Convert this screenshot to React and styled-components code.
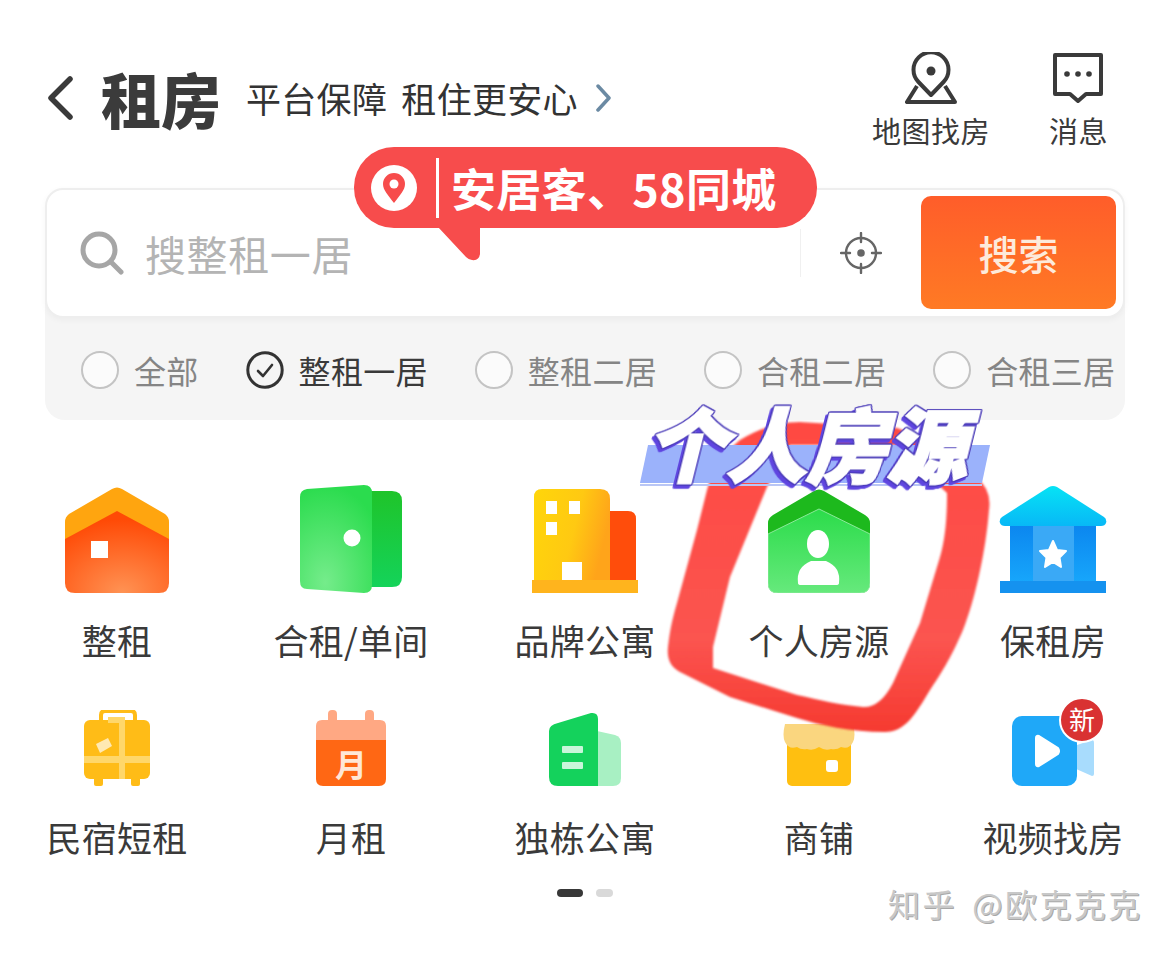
import React from 'react'
import styled, { createGlobalStyle } from 'styled-components'

const Global = createGlobalStyle`
  html, body { margin: 0; padding: 0; background: #fff; }
  body { font-family: "Noto Sans CJK SC", "Noto Sans", sans-serif; color: #3a3a3a; }
`

const Page = styled.div`
  position: relative;
  width: 1170px;
  height: 953px;
  overflow: hidden;
  background: #fff;
`

/* header */
const Header = styled.header`
  display: flex;
  justify-content: space-between;
  align-items: flex-start;
  height: 188px;
  padding: 52px 62px 0 47px;
  box-sizing: border-box;
`
const TitleGroup = styled.div`
  display: flex;
  align-items: center;
  height: 92px;
`
const Title = styled.h1`
  margin: 0 25px 0 28px;
  font-size: 60px;
  line-height: 92px;
  font-weight: 900;
  color: #3b3b3b;
`
const Slogan = styled.span`
  font-size: 35px;
  line-height: 92px;
  color: #333;
  word-spacing: 6px;
  letter-spacing: 0.3px;
  margin-right: 18px;
`
const Actions = styled.div`
  display: flex;
  gap: 59px;
`
const Action = styled.div`
  display: flex;
  flex-direction: column;
  align-items: center;
  gap: 4px;
  font-size: 29px;
  line-height: 44px;
  letter-spacing: 0.5px;
  color: #3a3a3a;
`

/* search */
const SearchArea = styled.section`
  margin: 0 45px;
`
const SearchBox = styled.div`
  position: relative;
  z-index: 1;
  display: flex;
  align-items: center;
  height: 130px;
  padding: 0 7px 0 33px;
  box-sizing: border-box;
  background: #fff;
  border: 2px solid #eeeeee;
  border-radius: 18px;
  box-shadow: 0 2px 6px rgba(0, 0, 0, 0.04);
`
const Placeholder = styled.span`
  flex: 1;
  margin-left: 21px;
  font-size: 41px;
  line-height: 60px;
  color: #b4b4b4;
  letter-spacing: 0.6px;
`
const Locate = styled.div`
  display: flex;
  align-items: center;
  justify-content: center;
  width: 120px;
  height: 48px;
  border-left: 1px solid #f0f0f0;
`
const SearchButton = styled.button`
  width: 195px;
  height: 113px;
  margin-top: -1px;
  border: 0;
  border-radius: 10px;
  background: linear-gradient(180deg, #ff5d2a 0%, #ff7a24 100%);
  color: #fdeadb;
  font-family: inherit;
  font-size: 40px;
  font-weight: 500;
`
const TagPanel = styled.div`
  display: flex;
  align-items: center;
  gap: 47px;
  height: 122px;
  margin-top: -20px;
  padding: 22px 0 0 36px;
  box-sizing: border-box;
  background: #f5f5f5;
  border-radius: 0 0 20px 20px;
`
const Tag = styled.div`
  display: flex;
  align-items: center;
  gap: 15px;
  font-size: 32px;
  line-height: 44px;
  letter-spacing: 0.3px;
  white-space: nowrap;
  color: ${p => (p.$on ? '#3a3a3a' : '#858585')};
`
const Radio = styled.span`
  width: 38px;
  height: 38px;
  box-sizing: border-box;
  border: 2px solid #c4c4c4;
  border-radius: 50%;
  background: #fbfbfb;
`

/* entries */
const EntryGrid = styled.div`
  display: grid;
  grid-template-columns: repeat(5, 234px);
  row-gap: 46px;
  margin-top: 67px;
`
const Entry = styled.div`
  display: flex;
  flex-direction: column;
  align-items: center;
  gap: 23px;
`
const IconBox = styled.div`
  position: relative;
  display: flex;
  align-items: flex-end;
  justify-content: center;
  height: ${p => p.$h}px;
  margin-bottom: ${p => p.$under || 0}px;
`
const EntryLabel = styled.span`
  font-size: 35px;
  line-height: 48px;
  letter-spacing: 0.3px;
  color: #3a3a3a;
  white-space: nowrap;
`
const NewBadge = styled.span`
  position: absolute;
  top: -13px;
  right: -11px;
  width: 46px;
  height: 46px;
  box-sizing: border-box;
  border: 2px solid #fff;
  border-radius: 50%;
  background: #d93232;
  color: #fff;
  font-size: 26px;
  line-height: 40px;
  text-align: center;
`
const Dots = styled.div`
  display: flex;
  justify-content: center;
  gap: 13px;
  margin-top: 28px;
`
const Dot = styled.span`
  width: ${p => (p.$on ? 26 : 17)}px;
  height: 8px;
  border-radius: 4px;
  background: ${p => (p.$on ? '#383838' : '#d9d9d9')};
`

/* things lying over the page */
const Bubble = styled.div`
  position: absolute;
  left: 354px;
  top: 147px;
  z-index: 2;
  display: flex;
  align-items: center;
  width: 463px;
  height: 81px;
  padding-left: 17px;
  box-sizing: border-box;
  border-radius: 40px;
  background: #f74c4c;
  color: #fff;
  font-size: 45px;
  line-height: 78px;
  font-weight: 700;
  letter-spacing: 0.3px;
  white-space: nowrap;
  &::after {
    content: '';
    position: absolute;
    left: 84px;
    top: 80px;
    width: 42px;
    height: 34px;
    background: #f74c4c;
    clip-path: path('M0 0 H42 V27 Q41 34 34 33 Q31 33 28 30 Z');
  }
`
const BubbleBar = styled.span`
  width: 3px;
  height: 60px;
  margin: 0 12px 0 19px;
  background: #fff;
`
const Scribble = styled.svg`
  position: absolute;
  left: 0;
  top: 0;
  z-index: 3;
  pointer-events: none;
`
const Banner = styled.div`
  position: absolute;
  left: 640px;
  top: 395px;
  z-index: 4;
  width: 352px;
  height: 100px;
`
const BannerBand = styled.span`
  position: absolute;
  left: 4px;
  top: 50px;
  width: 342px;
  height: 38px;
  background: #9bb2fb;
  transform: skewX(-12deg);
`
const BannerLine = styled.span`
  position: absolute;
  left: 0;
  top: 89px;
  width: 342px;
  height: 2px;
  background: #b9c6f5;
`
const BannerText = styled.span`
  position: absolute;
  left: 15px;
  top: -14px;
  font-size: 80px;
  line-height: 120px;
  font-weight: 900;
  color: #fff;
  white-space: nowrap;
  -webkit-text-stroke: 2.5px #fff;
  paint-order: stroke fill;
  filter: drop-shadow(1px 0 0 #4a3bb8) drop-shadow(-1px 0 0 #4a3bb8) drop-shadow(0 1px 0 #4a3bb8) drop-shadow(0 -1px 0 #4a3bb8) drop-shadow(-2px 3px 0 #5f45e0);
  transform: skewX(-14deg);
`
const Watermark = styled.div`
  position: absolute;
  left: 888px;
  top: 880px;
  z-index: 2;
  font-size: 32px;
  line-height: 46px;
  letter-spacing: 2.4px;
  word-spacing: 6px;
  color: #c8c8c8;
  white-space: nowrap;
  text-shadow: -1px -1px 0 #fff, 1px 1px 0 #a8a8a8;
`

/* drawings */
const BackIcon = () => (
  <svg width="26" height="44" viewBox="0 0 26 44" fill="none">
    <path d="M23 3 L4 22 L23 41" stroke="#3a3a3a" strokeWidth="5.5" strokeLinecap="round" strokeLinejoin="round" />
  </svg>
)
const MoreIcon = () => (
  <svg width="16" height="28" viewBox="0 0 16 28" fill="none">
    <path d="M2 2 L13 14 L2 26" stroke="#6b8aa3" strokeWidth="3.5" strokeLinecap="round" strokeLinejoin="round" />
  </svg>
)
const MapIcon = () => (
  <svg width="52" height="52" viewBox="0 0 52 52" fill="none" stroke="#3a3a3a" strokeWidth="4" strokeLinejoin="round">
    <path d="M26 43 L13.5 30 A17.5 17.5 0 1 1 38.5 30 Z" />
    <path d="M12 34 L2 50 H50 L40 34" />
    <circle cx="26" cy="19" r="4.5" fill="#3a3a3a" stroke="none" />
  </svg>
)
const MessageIcon = () => (
  <svg width="52" height="52" viewBox="0 0 52 52" fill="none" stroke="#3a3a3a" strokeWidth="4" strokeLinejoin="round">
    <path d="M3 3 H49 V42 H34 L26 49 L18 42 H3 Z" />
    <g fill="#3a3a3a" stroke="none">
      <circle cx="15" cy="22" r="2.8" />
      <circle cx="26" cy="22" r="2.8" />
      <circle cx="37" cy="22" r="2.8" />
    </g>
  </svg>
)
const SearchIcon = () => (
  <svg width="44" height="44" viewBox="0 0 44 44" fill="none" stroke="#a6a6a6" strokeWidth="5" strokeLinecap="round">
    <circle cx="19" cy="19" r="16" />
    <path d="M31 31 L41 41" />
  </svg>
)
const LocateIcon = () => (
  <svg width="42" height="42" viewBox="0 0 42 42" fill="none" stroke="#666" strokeWidth="2.4" strokeLinecap="round">
    <circle cx="21" cy="21" r="15" />
    <path d="M21 1 V10 M21 32 V41 M1 21 H10 M32 21 H41" />
    <circle cx="21" cy="21" r="3.8" fill="#666" stroke="none" />
  </svg>
)
const CheckIcon = () => (
  <svg width="38" height="38" viewBox="0 0 38 38" fill="none" stroke="#333" strokeLinecap="round" strokeLinejoin="round">
    <circle cx="19" cy="19" r="17.2" strokeWidth="3" />
    <path d="M12 20 L17 25 L26 14" strokeWidth="2.6" />
  </svg>
)
const PinIcon = () => (
  <svg width="46" height="46" viewBox="0 0 46 46">
    <circle cx="23" cy="23" r="23" fill="#fff" />
    <path d="M23 38 C17 30 12 25 12 19 A11 11 0 0 1 34 19 C34 25 29 30 23 38 Z" fill="#f74c4c" />
    <circle cx="23" cy="19" r="4.5" fill="#fff" />
  </svg>
)

const HouseIcon = () => (
  <svg width="104" height="106" viewBox="0 0 104 106">
    <defs>
      <radialGradient id="houseFill" cx="0.55" cy="1" r="0.9">
        <stop offset="0" stopColor="#ff9354" />
        <stop offset="1" stopColor="#ff4a06" />
      </radialGradient>
    </defs>
    <path d="M47 2 Q52 -1 57 2 L100 27 Q104 30 104 35 V60 H0 V35 Q0 30 4 27 Z" fill="#ffa50f" />
    <path d="M0 52 L52 24 L104 52 V96 Q104 106 94 106 H10 Q0 106 0 96 Z" fill="url(#houseFill)" />
    <rect x="26" y="54" width="17" height="17" fill="#fff" />
  </svg>
)
const DoorIcon = () => (
  <svg width="102" height="108" viewBox="0 0 102 108">
    <defs>
      <linearGradient id="doorBack" x1="0" y1="0" x2="0" y2="1">
        <stop offset="0" stopColor="#1fc42a" />
        <stop offset="1" stopColor="#14d35a" />
      </linearGradient>
      <radialGradient id="doorFront" cx="0.35" cy="0.9" r="0.9">
        <stop offset="0" stopColor="#75ec8b" />
        <stop offset="1" stopColor="#2bdc4e" />
      </radialGradient>
    </defs>
    <path d="M66 6 H92 Q102 6 102 16 V92 Q102 102 92 102 H66 Z" fill="url(#doorBack)" />
    <path d="M7 4 L64 0 Q72 0 72 8 V100 Q72 108 64 108 L7 104 Q0 104 0 96 V12 Q0 5 7 4 Z" fill="url(#doorFront)" />
    <circle cx="52" cy="53" r="8.5" fill="#fff" />
  </svg>
)
const BuildingIcon = () => (
  <svg width="106" height="104" viewBox="0 0 106 104">
    <defs>
      <linearGradient id="towerFill" x1="0" y1="0" x2="1" y2="0.3">
        <stop offset="0" stopColor="#ffd60a" />
        <stop offset="0.6" stopColor="#ffc912" />
        <stop offset="1" stopColor="#ffa41a" />
      </linearGradient>
    </defs>
    <path d="M76 22 H96 Q104 22 104 30 V94 H76 Z" fill="#ff4d0b" />
    <path d="M10 0 H68 Q78 0 78 10 V94 H2 V8 Q2 0 10 0 Z" fill="url(#towerFill)" />
    <rect x="14" y="12" width="11" height="13" fill="#fff" />
    <rect x="37" y="12" width="11" height="13" fill="#fff" />
    <rect x="14" y="33" width="11" height="13" fill="#fff" />
    <rect x="30" y="73" width="20" height="20" fill="#fff" />
    <rect x="0" y="91" width="106" height="13" fill="#ffb41d" />
  </svg>
)
const PersonHouseIcon = () => (
  <svg width="102" height="104" viewBox="0 0 102 104">
    <defs>
      <linearGradient id="personFill" x1="0" y1="0" x2="0" y2="1">
        <stop offset="0" stopColor="#2bdc4a" />
        <stop offset="1" stopColor="#66e97c" />
      </linearGradient>
    </defs>
    <path d="M46 2 Q51 -1 56 2 L97 26 Q102 29 102 34 V60 H0 V34 Q0 29 5 26 Z" fill="#1db91d" />
    <path d="M0 45 L51 20 L102 45 V94 Q102 104 92 104 H10 Q0 104 0 94 Z" fill="url(#personFill)" stroke="#8be99a" strokeWidth="1" />
    <ellipse cx="50" cy="55" rx="11" ry="14" fill="#fff" />
    <path d="M30 94 Q28 78 43 72 H58 Q73 78 71 94 Q71 96 68 96 H33 Q30 96 30 94 Z" fill="#fff" />
  </svg>
)
const BankIcon = () => (
  <svg width="108" height="107" viewBox="0 0 108 107">
    <defs>
      <linearGradient id="bankRoof" x1="0" y1="0" x2="0" y2="1">
        <stop offset="0" stopColor="#06e3f5" />
        <stop offset="1" stopColor="#08b8f6" />
      </linearGradient>
      <linearGradient id="bankBody" x1="0" y1="0" x2="0" y2="1">
        <stop offset="0" stopColor="#0b86ef" />
        <stop offset="1" stopColor="#17a6fb" />
      </linearGradient>
    </defs>
    <rect x="11" y="38" width="86" height="58" fill="url(#bankBody)" />
    <rect x="34" y="38" width="41" height="58" fill="#3aa9f6" />
    <path d="M50 1 Q54 -1 58 1 L105 31 Q108 33 107 37 Q106 40 102 40 H6 Q2 40 1 37 Q0 33 3 31 Z" fill="url(#bankRoof)" />
    <path d="M54 55 L58 64 L67 65 L60.5 71.5 L62 81 L54 76 L46 81 L47.5 71.5 L41 65 L50 64 Z" fill="#fff" stroke="#fff" strokeWidth="2" strokeLinejoin="round" />
    <rect x="1" y="95" width="106" height="12" fill="#1592ef" />
  </svg>
)
const CaseIcon = () => (
  <svg width="66" height="76" viewBox="0 0 66 76">
    <path d="M17 11 V5 Q17 1 21 1 H47 Q51 1 51 5 V11" fill="none" stroke="#ffbc17" strokeWidth="4" />
    <rect x="10" y="62" width="9" height="14" rx="2" fill="#ffbc17" />
    <rect x="47" y="62" width="9" height="14" rx="2" fill="#ffbc17" />
    <rect x="0" y="10" width="66" height="59" rx="6" fill="#ffbc17" />
    <rect x="0" y="46" width="66" height="7" fill="#ffd76a" />
    <path d="M24 7 H41 V69 H35 V13 H24 Z" fill="#ffd76a" />
    <path d="M12 34 L24 28 L28 36 L16 43 Z" fill="#ffe9b3" />
  </svg>
)
const CalendarIcon = () => (
  <svg width="72" height="76" viewBox="0 0 72 76">
    <rect x="13" y="0" width="9" height="16" rx="4" fill="#ffa883" />
    <rect x="50" y="0" width="9" height="16" rx="4" fill="#ffa883" />
    <path d="M7 10 H65 Q71 10 71 16 V32 H1 V16 Q1 10 7 10 Z" fill="#ffa883" />
    <path d="M1 30 H71 V69 Q71 76 64 76 H8 Q1 76 1 69 Z" fill="#ff6714" />
    <text x="36" y="67" textAnchor="middle" fontSize="32" fontWeight="700" fill="#ffe7d6" fontFamily='"Noto Sans CJK SC", sans-serif'>月</text>
  </svg>
)
const BlockIcon = () => (
  <svg width="72" height="74" viewBox="0 0 72 74">
    <path d="M48 19 L66 23 Q72 25 72 31 V66 Q72 74 64 74 H46 Z" fill="#a8f0c3" />
    <path d="M9 11 L42 1 Q49 0 49 7 V74 H9 Q0 74 0 65 V19 Q0 13 9 11 Z" fill="#14d25c" />
    <rect x="13" y="34" width="21" height="7" rx="1" fill="#c9f6da" />
    <rect x="13" y="50" width="21" height="7" rx="1" fill="#c9f6da" />
  </svg>
)
const ShopIcon = () => (
  <svg width="72" height="68" viewBox="0 0 72 68">
    <rect x="4" y="16" width="64" height="52" rx="5" fill="#ffbf10" />
    <path d="M2 6 H70 Q73 18 70 24 Q66 32 58 29 Q54 32 48 31 Q42 33 36 29 Q30 33 24 31 Q18 32 14 29 Q6 32 2 24 Q-1 18 2 6 Z" fill="#fad67f" />
    <rect x="43" y="42" width="12" height="12" rx="3" fill="#fff" />
  </svg>
)
const VideoIcon = () => (
  <svg width="82" height="70" viewBox="0 0 82 70">
    <path d="M62 30 L80 24 Q82 24 82 27 V58 Q82 60 80 60 L62 52 Z" fill="#a8dcfd" />
    <rect x="0" y="0" width="65" height="70" rx="10" fill="#1fa8f8" />
    <path d="M24 22 Q24 19 27 20 L46 32 Q48 35 46 38 L27 50 Q24 51 24 48 Z" fill="#fff" stroke="#fff" strokeWidth="2" strokeLinejoin="round" />
  </svg>
)

const tags = [
  { text: '全部' },
  { text: '整租一居', on: true },
  { text: '整租二居' },
  { text: '合租二居' },
  { text: '合租三居' },
]

const entries = [
  { label: '整租', h: 106, Icon: HouseIcon },
  { label: '合租/单间', h: 106, Icon: DoorIcon },
  { label: '品牌公寓', h: 106, Icon: BuildingIcon },
  { label: '个人房源', h: 106, Icon: PersonHouseIcon },
  { label: '保租房', h: 106, Icon: BankIcon },
  { label: '民宿短租', h: 76, under: 4, Icon: CaseIcon },
  { label: '月租', h: 76, under: 4, Icon: CalendarIcon },
  { label: '独栋公寓', h: 76, under: 4, Icon: BlockIcon },
  { label: '商铺', h: 76, under: 4, Icon: ShopIcon },
  { label: '视频找房', h: 76, under: 4, Icon: VideoIcon, isNew: true },
]

const App = () => {
  return (
    <Page>
      <Global />
      <Header>
        <TitleGroup>
          <BackIcon />
          <Title>租房</Title>
          <Slogan>平台保障 租住更安心</Slogan>
          <MoreIcon />
        </TitleGroup>
        <Actions>
          <Action><MapIcon />地图找房</Action>
          <Action><MessageIcon />消息</Action>
        </Actions>
      </Header>

      <SearchArea>
        <SearchBox>
          <SearchIcon />
          <Placeholder>搜整租一居</Placeholder>
          <Locate><LocateIcon /></Locate>
          <SearchButton>搜索</SearchButton>
        </SearchBox>
        <TagPanel>
          {tags.map(t => (
            <Tag key={t.text} $on={t.on}>
              {t.on ? <CheckIcon /> : <Radio />}
              {t.text}
            </Tag>
          ))}
        </TagPanel>
      </SearchArea>

      <EntryGrid>
        {entries.map(({ label, h, under, Icon, isNew }) => (
          <Entry key={label}>
            <IconBox $h={h} $under={under}>
              <Icon />
              {isNew && <NewBadge>新</NewBadge>}
            </IconBox>
            <EntryLabel>{label}</EntryLabel>
          </Entry>
        ))}
      </EntryGrid>
      <Dots>
        <Dot $on />
        <Dot />
      </Dots>

      <Bubble>
        <PinIcon />
        <BubbleBar />
        安居客、58同城
      </Bubble>

      <Scribble width="1170" height="953" viewBox="0 0 1170 953">
        <defs>
          <filter id="soft"><feGaussianBlur stdDeviation="1.2" /></filter>
          <linearGradient id="scribbleFill" x1="0" y1="0" x2="0" y2="1">
            <stop offset="0" stopColor="#ff4a42" />
            <stop offset="0.7" stopColor="#fb5450" />
            <stop offset="1" stopColor="#f63a30" />
          </linearGradient>
        </defs>
        <path
          filter="url(#soft)"
          fill="url(#scribbleFill)"
          fillRule="evenodd"
          d="M740 440 C760 428 780 422 800 422 L897 428 C930 440 960 460 977 478 Q992 490 989 510 C986 550 975 600 963 630 C950 660 940 675 930 690 C915 715 905 732 885 732 C850 732 820 725 797 718 L730 697 L680 672 Q666 665 668 647 C670 630 672 620 677 603 L697 530 L707 490 Q715 460 740 440 Z
             M767 487 L790 445 H895 L947 493 C947 520 945 540 940 557 L920 623 L893 683 Q880 708 863 707 C840 705 820 700 797 695 L713 668 L713 647 L730 577 Z"
        />
      </Scribble>

      <Banner>
        <BannerBand />
        <BannerLine />
        <BannerText>个人房源</BannerText>
      </Banner>

      <Watermark>知乎 @欧克克克</Watermark>
    </Page>
  )
}

export default App
